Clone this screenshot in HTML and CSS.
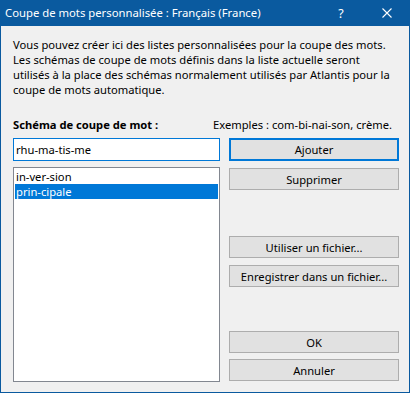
FILE: index.html
```html
<!DOCTYPE html>
<html lang="fr">
<head>
  <meta charset="UTF-8" />
  <title>Coupe de mots personnalisée</title>
  <link rel="stylesheet" href="styles.css">
</head>
<body>

  <div class="window">
    <div class="titlebar">
      <span class="title">Coupe de mots personnalisée : Français (France)</span>
      <span class="tb-btn help">?</span>
      <span class="tb-btn close">
        <svg width="10" height="10" viewBox="0 0 10 10">
          <path d="M0.5 0.5 L9.5 9.5 M9.5 0.5 L0.5 9.5" stroke="#fff" stroke-width="1.1" fill="none"/>
        </svg>
      </span>
    </div>

    <div class="content">
      <p class="intro">Vous pouvez créer ici des listes personnalisées pour la coupe des mots.<br>
        Les schémas de coupe de mots définis dans la liste actuelle seront<br>
        utilisés à la place des schémas normalement utilisés par Atlantis pour la<br>
        coupe de mots automatique.</p>

      <div class="label-row">
        <span class="label">Schéma de coupe de mot :</span>
        <span class="examples">Exemples : com-bi-nai-son, crème.</span>
      </div>

      <div class="main">
        <div class="left">
          <div class="field">rhu-ma-tis-me</div>
          <ul class="list">
            <li>in-ver-sion</li>
            <li class="selected">prin-cipale</li>
          </ul>
        </div>
        <div class="right">
          <button class="btn default">Ajouter</button>
          <button class="btn gap-s">Supprimer</button>
          <button class="btn gap-l">Utiliser un fichier...</button>
          <button class="btn gap-s">Enregistrer dans un fichier...</button>
          <button class="btn gap-xl">OK</button>
          <button class="btn gap-xs">Annuler</button>
        </div>
      </div>
    </div>
  </div>

</body>
</html>
```

FILE: styles.css
```css
body {
  margin: 0;
  padding: 0;
  font-family: 'Noto Sans', sans-serif;
  font-size: 11.2px;
  color: #000;
  background: #f0f0f0;
}

.window {
  width: 408px;
  height: 392px;
  border: 1px solid #0a5a9f;
  border-top: none;
  background: #f0f0f0;
}

.titlebar {
  height: 26px;
  background: #0a5a9f;
  color: #fff;
  display: flex;
  align-items: center;
  margin: 0 -1px;
}

.title {
  flex: 1;
  padding-left: 5px;
  font-size: 11.3px;
  line-height: 26px;
}

.tb-btn {
  width: 46px;
  height: 26px;
  display: flex;
  align-items: center;
  justify-content: center;
}

.help {
  font-size: 12.5px;
}

.content {
  padding: 11px 9px 0 12px;
}

.intro {
  margin: 0;
  line-height: 15px;
  white-space: nowrap;
}

.label-row {
  display: flex;
  justify-content: space-between;
  margin-top: 20px;
  padding-right: 8px;
  line-height: 15px;
}

.label {
  font-weight: bold;
}

.main {
  display: flex;
  gap: 9px;
  margin-top: 6px;
}

.left {
  width: 207px;
}

.field {
  height: 21px;
  border: 1px solid #0078d7;
  background: #fff;
  padding-left: 2px;
  line-height: 21px;
}

.list {
  list-style: none;
  margin: 6px 0 0;
  padding: 1px;
  height: 211px;
  border: 1px solid #828790;
  background: #fff;
}

.list li {
  height: 15px;
  line-height: 15px;
  padding-left: 1px;
}

.list li.selected {
  background: #0078d7;
  color: #fff;
}

.right {
  width: 170px;
  display: flex;
  flex-direction: column;
}

.btn {
  height: 22px;
  padding: 0;
  font-family: inherit;
  font-size: 11.2px;
  color: #000;
  background: #e1e1e1;
  border: 1px solid #adadad;
}

.btn.default {
  height: 23px;
  border: 2px solid #0078d7;
}

.gap-xs { margin-top: 6px; }
.gap-s  { margin-top: 7px; }
.gap-l  { margin-top: 46px; }
.gap-xl { margin-top: 44px; }
```
